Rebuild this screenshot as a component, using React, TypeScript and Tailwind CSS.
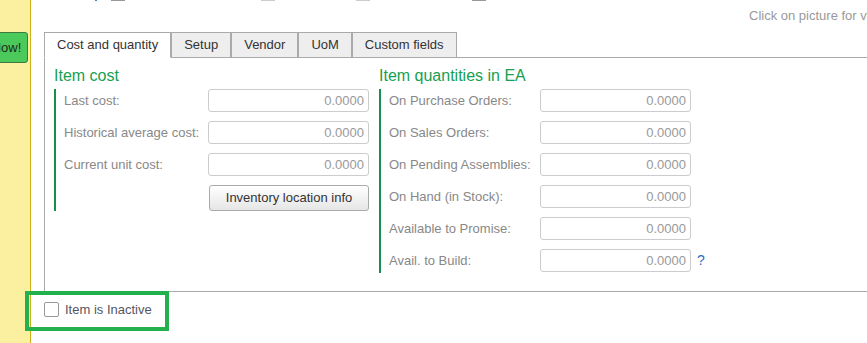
import React from 'react';

const costRows = ['Last cost:', 'Historical average cost:', 'Current unit cost:'];
const qtyRows = [
  'On Purchase Orders:',
  'On Sales Orders:',
  'On Pending Assemblies:',
  'On Hand (in Stock):',
  'Available to Promise:',
  'Avail. to Build:',
];
const tabs = ['Cost and quantity', 'Setup', 'Vendor', 'UoM', 'Custom fields'];

function NumberBox({ width }: { width: string }) {
  return (
    <div
      className={`${width} flex h-[23px] items-center justify-end rounded-[3px] border border-[#cccccc] bg-white pr-[4px] text-[#999999]`}
    >
      0.0000
    </div>
  );
}

export default function App() {
  return (
    <div className="relative flex h-[343px] w-[867px] overflow-hidden bg-white font-['Liberation_Sans',Arial,sans-serif] text-[13px] text-[#333333]">
      {/* left sidebar */}
      <aside className="w-[31px] shrink-0 border-r border-[#cdb21a] bg-[#faf0a0] pt-[32px]">
        <button className="ml-[-15px] flex h-[31px] w-[43px] items-center justify-center rounded-[3px] border border-[#3d7a3f] bg-[#4bc95b] text-[13px] text-[#1d2b1d]">
          Now!
        </button>
      </aside>

      <main className="min-w-0 flex-1 overflow-hidden">
        {/* cut-off controls from above */}
        <div className="flex h-[2px] items-start">
          <span className="ml-[64px] h-[1px] w-[2px] bg-[#4a7fd0]" />
          <span className="ml-[14px] h-[1px] w-[14px] bg-[#999999]" />
          <span className="ml-[136px] h-[1px] w-[14px] bg-[#cccccc]" />
          <span className="ml-[81px] h-[1px] w-[14px] bg-[#cccccc]" />
          <span className="ml-[102px] h-[1px] w-[14px] bg-[#999999]" />
        </div>
        <div className="mt-[6px] whitespace-nowrap pl-[718px] leading-[15px] text-[#999999]">
          Click on picture for view
        </div>

        {/* tabs */}
        <div className="ml-[13px] mt-[9px] flex w-[830px] border-b border-[#aaaaaa]">
          {tabs.map((t, i) => (
            <div
              key={t}
              className={
                i === 0
                  ? '-mb-px flex h-[26px] items-center border border-b-white border-[#aaaaaa] bg-white px-3'
                  : 'flex h-[25px] items-center border border-b-0 border-[#aaaaaa] bg-[#eeeeee] px-3'
              }
            >
              {t}
            </div>
          ))}
        </div>

        {/* panel */}
        <div className="ml-[13px] flex w-[830px] gap-[10px] border-b border-l border-[#aaaaaa] pb-[18px] pl-[9px] pt-[8px]">
          <section className="w-[315px]">
            <h2 className="text-[16px] leading-[20px] text-[#17a04f]">Item cost</h2>
            <div className="mt-[3px] flex flex-col gap-[9px] border-l-2 border-[#14904a] pl-[8px]">
              {costRows.map((r) => (
                <div key={r} className="flex items-center">
                  <span className="w-[144px] whitespace-nowrap text-[#888888]">{r}</span>
                  <NumberBox width="w-[161px]" />
                </div>
              ))}
              <div className="flex pl-[145px]">
                <button className="h-[26px] w-[160px] rounded-[3px] border border-[#aaaaaa] bg-gradient-to-b from-white to-[#e6e6e6] text-[#333333]">
                  Inventory location info
                </button>
              </div>
            </div>
          </section>

          <section className="w-[330px]">
            <h2 className="text-[16px] leading-[20px] text-[#17a04f]">Item quantities in EA</h2>
            <div className="mt-[3px] flex flex-col gap-[9px] border-l-2 border-[#14904a] pb-[1px] pl-[8px]">
              {qtyRows.map((r, i) => (
                <div key={r} className="flex items-center">
                  <span className="w-[151px] whitespace-nowrap text-[#888888]">{r}</span>
                  <NumberBox width="w-[151px]" />
                  {i === qtyRows.length - 1 && (
                    <span className="ml-[6px] text-[14px] text-[#2a6ebb]">?</span>
                  )}
                </div>
              ))}
            </div>
          </section>
        </div>

        {/* inactive checkbox */}
        <label className="ml-[13px] mt-[10px] flex h-[15px] items-center leading-[15px]">
          <span className="h-[15px] w-[15px] rounded-[2px] border border-[#999999] bg-white" />
          <span className="ml-[6px] text-[#555560]">Item is Inactive</span>
        </label>
      </main>

      {/* highlight annotation */}
      <div className="pointer-events-none absolute left-[25px] top-[291px] h-[40px] w-[144px] border-4 border-[#22b14c]" />
    </div>
  );
}
